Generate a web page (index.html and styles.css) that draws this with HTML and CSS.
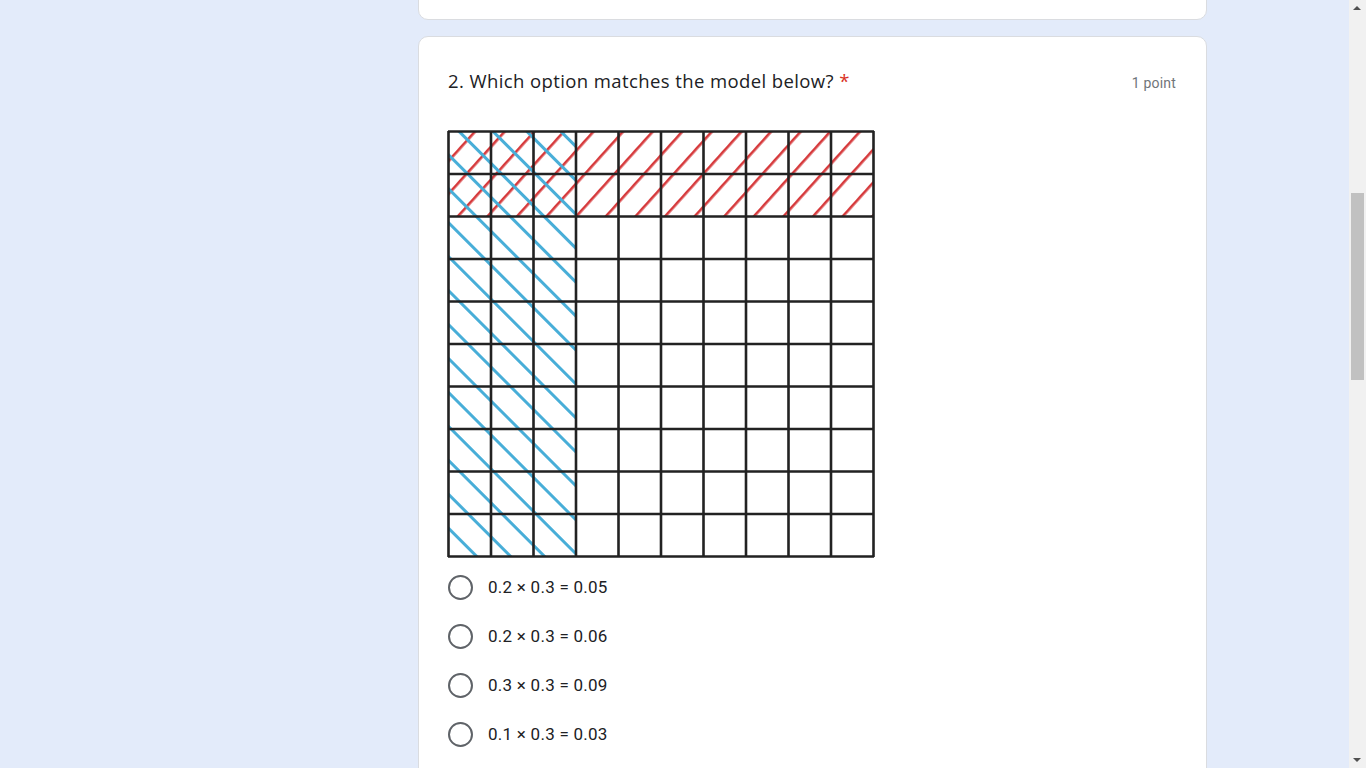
FILE: index.html
```html
<!DOCTYPE html>
<html>
<head>
<meta charset="utf-8">
<link rel="stylesheet" href="styles.css">
</head>
<body>
<div class="page">
  <div class="card card-prev"></div>
  <div class="card card-q">
    <div class="q-head">
      <div class="q-title">2. Which option matches the model below? <span class="req">*</span></div>
      <div class="q-points">1 point</div>
    </div>
    <svg class="model" width="430" height="430" viewBox="0 0 430 430">
      <defs>
        <pattern id="redHatch" patternUnits="userSpaceOnUse" width="22" height="10" patternTransform="rotate(42)">
          <rect x="0" y="0" width="2.6" height="10" fill="#d63a3c"/>
        </pattern>
        <pattern id="blueHatch" patternUnits="userSpaceOnUse" width="24" height="10" patternTransform="rotate(-45) translate(6 0)">
          <rect x="0" y="0" width="3" height="10" fill="#48aed8"/>
        </pattern>
      </defs>
      <rect x="2" y="2" width="426" height="86" fill="url(#redHatch)"/>
      <rect x="2" y="2" width="128" height="426" fill="url(#blueHatch)"/>
      <g stroke="#222" stroke-width="2.6" fill="none">
        <path d="M2.5 2V428 M45 2V428 M87.5 2V428 M130 2V428 M172.5 2V428 M215 2V428 M257.5 2V428 M300 2V428 M342.5 2V428 M385 2V428 M427.5 2V428"/>
        <path d="M2 2.5H428 M2 45H428 M2 87.5H428 M2 130H428 M2 172.5H428 M2 215H428 M2 257.5H428 M2 300H428 M2 342.5H428 M2 385H428 M2 427.5H428"/>
      </g>
    </svg>
    <div class="options">
      <label class="opt"><span class="radio"></span><span class="opt-text">0.2 × 0.3 = 0.05</span></label>
      <label class="opt"><span class="radio"></span><span class="opt-text">0.2 × 0.3 = 0.06</span></label>
      <label class="opt"><span class="radio"></span><span class="opt-text">0.3 × 0.3 = 0.09</span></label>
      <label class="opt"><span class="radio"></span><span class="opt-text">0.1 × 0.3 = 0.03</span></label>
    </div>
  </div>
</div>
<div class="scrollbar">
  <div class="sb-up"></div>
  <div class="sb-thumb"></div>
  <div class="sb-down"></div>
</div>
</body>
</html>
```
FILE: styles.css
```css
html, body {
  margin: 0;
  padding: 0;
  height: 100%;
  overflow: hidden;
}
body {
  background: #e3ebfa;
  font-family: Roboto, "Liberation Sans", Arial, sans-serif;
  color: #202124;
}
.page {
  margin-left: 418px;
  width: 789px;
  display: flex;
  flex-direction: column;
  gap: 16px;
}
.card {
  background: #fff;
  border: 1px solid #dadce0;
  border-radius: 10px;
  box-sizing: border-box;
}
.card-prev {
  margin-top: -100px;
  height: 120px;
}
.card-q {
  padding: 30px 30px 40px 29px;
}
.q-head {
  display: flex;
  justify-content: space-between;
  align-items: baseline;
}
.q-title {
  font-family: "Open Sans", Roboto, sans-serif;
  font-size: 18.5px;
  line-height: 28px;
  color: #202124;
  letter-spacing: 0.4px;
}
.req {
  color: #d93025;
}
.q-points {
  font-size: 14px;
  color: #70757a;
  letter-spacing: 0.2px;
}
.model {
  display: block;
  margin-top: 34px;
  margin-left: -2px;
}
.options {
  display: flex;
  flex-direction: column;
  gap: 24px;
  margin-top: 16px;
}
.opt {
  display: flex;
  align-items: center;
  height: 25px;
}
.radio {
  width: 25px;
  height: 25px;
  box-sizing: border-box;
  border: 2.5px solid #5f6368;
  border-radius: 50%;
  flex: none;
}
.opt-text {
  margin-left: 15px;
  margin-top: -2px;
  font-size: 17px;
  letter-spacing: 0.25px;
  color: #202124;
}
.scrollbar {
  position: fixed;
  top: 0;
  right: 0;
  width: 17px;
  height: 100%;
  background: #f1f1f1;
}
.sb-up, .sb-down {
  position: absolute;
  left: 4px;
  width: 0;
  height: 0;
  border-left: 4px solid transparent;
  border-right: 4px solid transparent;
}
.sb-up {
  top: 6px;
  border-bottom: 4px solid #505050;
}
.sb-down {
  bottom: 6px;
  border-top: 4px solid #505050;
}
.sb-thumb {
  position: absolute;
  left: 2px;
  width: 13px;
  top: 193px;
  height: 187px;
  background: #c1c1c1;
}
```
